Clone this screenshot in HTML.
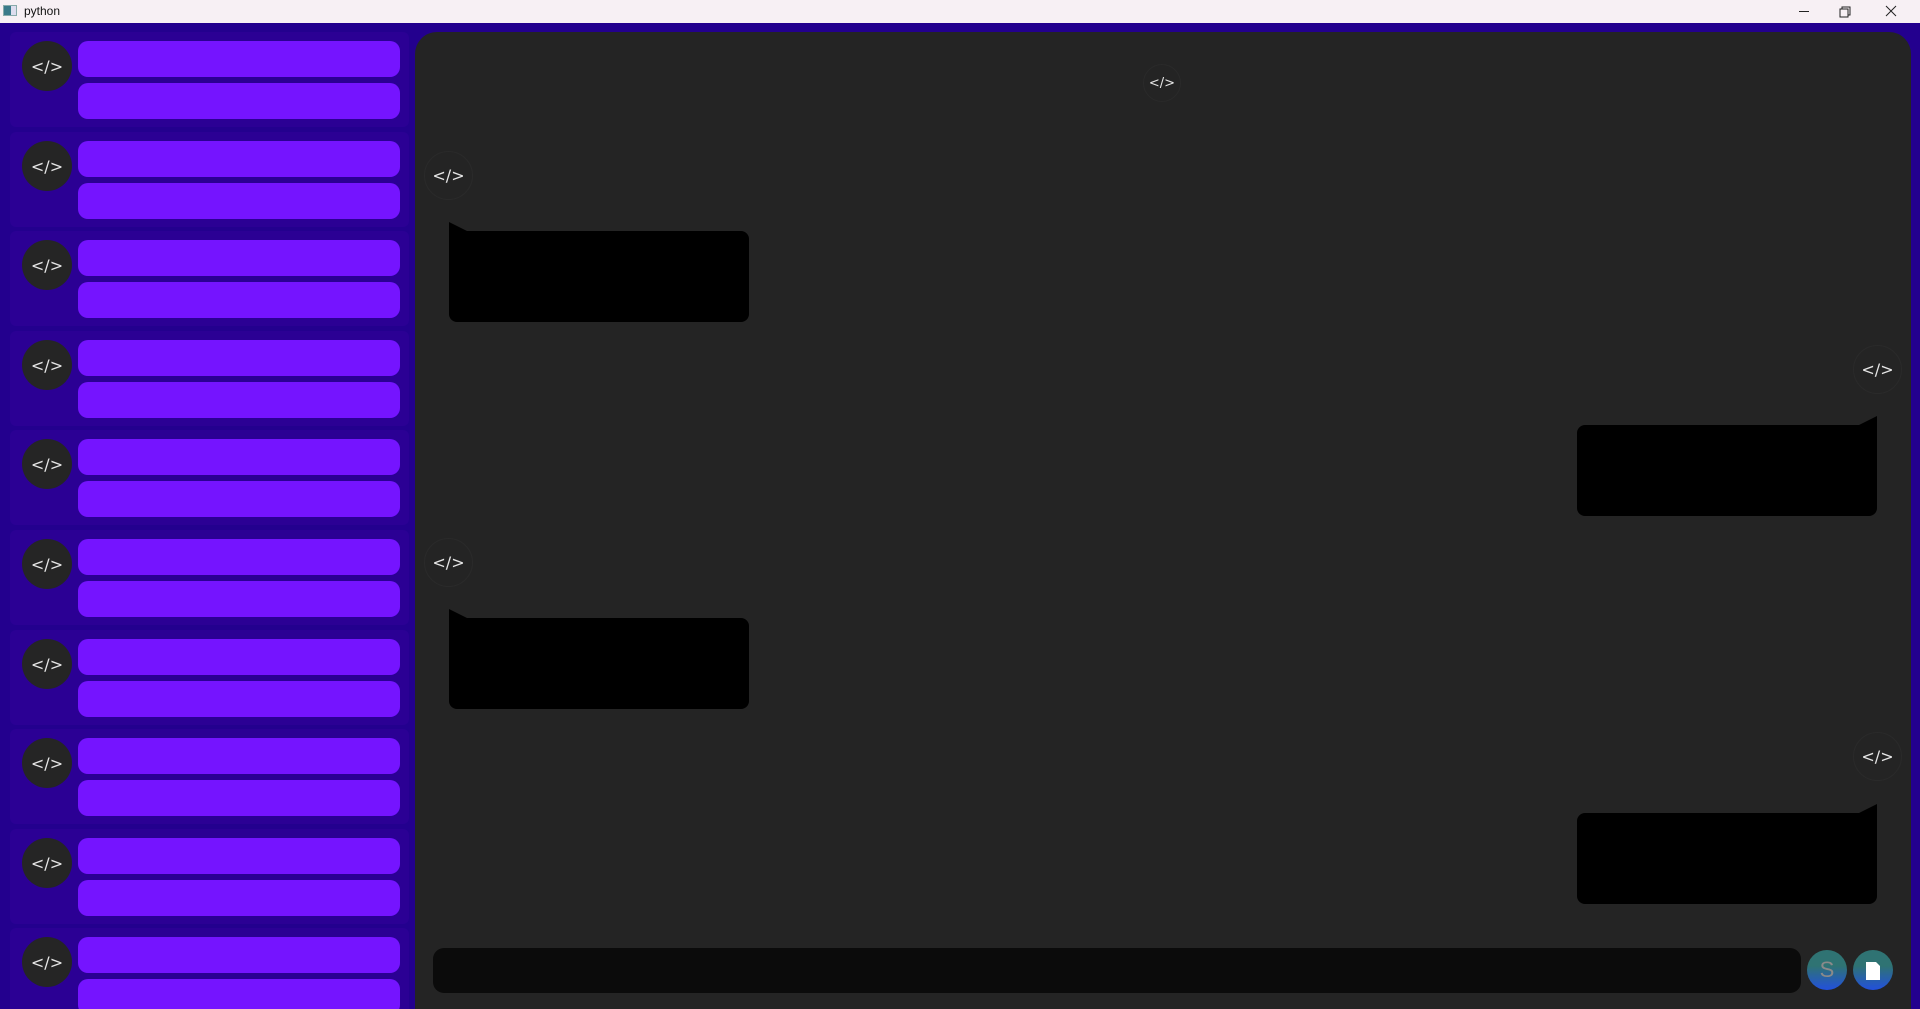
<!DOCTYPE html>
<html style="overflow:hidden;height:1009px"><head><meta charset="utf-8"><style>
*{margin:0;padding:0;box-sizing:border-box}
body{width:1920px;height:1009px;overflow:hidden;background:#23008e;font-family:"Liberation Sans","DejaVu Sans",sans-serif;position:relative}
#w{position:absolute;left:0;top:0;width:1920px;height:1009px;overflow:hidden}
.tb{position:absolute;left:0;top:0;width:1920px;height:23px;background:#f7f0f4;}
.tb .t{position:absolute;left:24px;top:4px;font-size:12px;color:#111}
.ic{position:absolute;left:3px;top:5px;width:14px;height:11px;border:1px solid #8aa;background:linear-gradient(90deg,#3a7a8a 0 60%,#dde 60%)}
.ab{position:absolute}
.row{position:absolute;left:10px;width:399px;height:95px;background:#2b0094;border-radius:6px}
.av{position:absolute;border-radius:50%;background:#252525;color:#e6e6e6;display:flex;align-items:center;justify-content:center;font-family:"DejaVu Sans",sans-serif}
.bar{position:absolute;left:68px;width:322px;height:36px;background:#7514ff;border-radius:10px}
.main{position:absolute;left:415px;top:32px;width:1496px;height:1000px;background:#242424;border-radius:22px}
.bub{position:absolute;width:300px;height:91px;background:#000;border-radius:8px}
.ca{position:absolute;border-radius:50%;border:1px solid #2a2a2a;background:#242424;color:#e6e6e6;display:flex;align-items:center;justify-content:center;font-family:"DejaVu Sans",sans-serif}
</style></head><body><div id="w">
<div class="tb"><div class="ic"></div><span class="t">python</span>
<svg class="ab" style="left:1795px;top:4px" width="120" height="16"><path d="M4 7.5h10" stroke="#222" stroke-width="1"/><rect x="45" y="5" width="8" height="8" fill="none" stroke="#222"/><path d="M47 5V3h8v8h-2" fill="none" stroke="#222"/><path d="M91 2l10 10M101 2l-10 10" stroke="#222"/></svg></div>

<div class="row" style="top:32px"><div class="av" style="left:12px;top:9px;width:50px;height:50px;font-size:16px">&lt;/&gt;</div><div class="bar" style="top:9px"></div><div class="bar" style="top:51px"></div></div>
<div class="row" style="top:132px"><div class="av" style="left:12px;top:9px;width:50px;height:50px;font-size:16px">&lt;/&gt;</div><div class="bar" style="top:9px"></div><div class="bar" style="top:51px"></div></div>
<div class="row" style="top:231px"><div class="av" style="left:12px;top:9px;width:50px;height:50px;font-size:16px">&lt;/&gt;</div><div class="bar" style="top:9px"></div><div class="bar" style="top:51px"></div></div>
<div class="row" style="top:331px"><div class="av" style="left:12px;top:9px;width:50px;height:50px;font-size:16px">&lt;/&gt;</div><div class="bar" style="top:9px"></div><div class="bar" style="top:51px"></div></div>
<div class="row" style="top:430px"><div class="av" style="left:12px;top:9px;width:50px;height:50px;font-size:16px">&lt;/&gt;</div><div class="bar" style="top:9px"></div><div class="bar" style="top:51px"></div></div>
<div class="row" style="top:530px"><div class="av" style="left:12px;top:9px;width:50px;height:50px;font-size:16px">&lt;/&gt;</div><div class="bar" style="top:9px"></div><div class="bar" style="top:51px"></div></div>
<div class="row" style="top:630px"><div class="av" style="left:12px;top:9px;width:50px;height:50px;font-size:16px">&lt;/&gt;</div><div class="bar" style="top:9px"></div><div class="bar" style="top:51px"></div></div>
<div class="row" style="top:729px"><div class="av" style="left:12px;top:9px;width:50px;height:50px;font-size:16px">&lt;/&gt;</div><div class="bar" style="top:9px"></div><div class="bar" style="top:51px"></div></div>
<div class="row" style="top:829px"><div class="av" style="left:12px;top:9px;width:50px;height:50px;font-size:16px">&lt;/&gt;</div><div class="bar" style="top:9px"></div><div class="bar" style="top:51px"></div></div>
<div class="row" style="top:928px;height:100px"><div class="av" style="left:12px;top:9px;width:50px;height:50px;font-size:16px">&lt;/&gt;</div><div class="bar" style="top:9px"></div><div class="bar" style="top:51px"></div></div>

<div class="main"></div>
<div class="ca" style="left:1143px;top:64px;width:38px;height:38px;font-size:13px">&lt;/&gt;</div>

<div class="ca" style="left:424px;top:151px;width:49px;height:49px;font-size:16px">&lt;/&gt;</div>
<svg class="ab" style="left:449px;top:222px" width="20" height="12"><path d="M0 0L18 9H0z" fill="#000"/></svg>
<div class="bub" style="left:449px;top:231px;border-top-left-radius:0"></div>

<div class="ca" style="left:1853px;top:345px;width:49px;height:49px;font-size:16px">&lt;/&gt;</div>
<svg class="ab" style="left:1857px;top:416px" width="20" height="12"><path d="M20 0L2 9H20z" fill="#000"/></svg>
<div class="bub" style="left:1577px;top:425px;border-top-right-radius:0"></div>

<div class="ca" style="left:424px;top:538px;width:49px;height:49px;font-size:16px">&lt;/&gt;</div>
<svg class="ab" style="left:449px;top:609px" width="20" height="12"><path d="M0 0L18 9H0z" fill="#000"/></svg>
<div class="bub" style="left:449px;top:618px;border-top-left-radius:0"></div>

<div class="ca" style="left:1853px;top:732px;width:49px;height:49px;font-size:16px">&lt;/&gt;</div>
<svg class="ab" style="left:1857px;top:804px" width="20" height="12"><path d="M20 0L2 9H20z" fill="#000"/></svg>
<div class="bub" style="left:1577px;top:813px;border-top-right-radius:0"></div>

<div class="ab" style="left:433px;top:948px;width:1368px;height:45px;background:#0b0b0b;border-radius:11px"></div>
<div class="ab" style="left:1807px;top:950px;width:40px;height:40px;border-radius:50%;background:linear-gradient(#2f7373 40%,#2250dd);color:#8a8a8a;font-size:22px;display:flex;align-items:center;justify-content:center">S</div>
<div class="ab" style="left:1853px;top:950px;width:40px;height:40px;border-radius:50%;background:linear-gradient(#2f7373 40%,#2250dd)"><svg width="40" height="40"><path d="M13 12h10l4 4v14H13z" fill="#fff"/></svg></div>
</div></body></html>
